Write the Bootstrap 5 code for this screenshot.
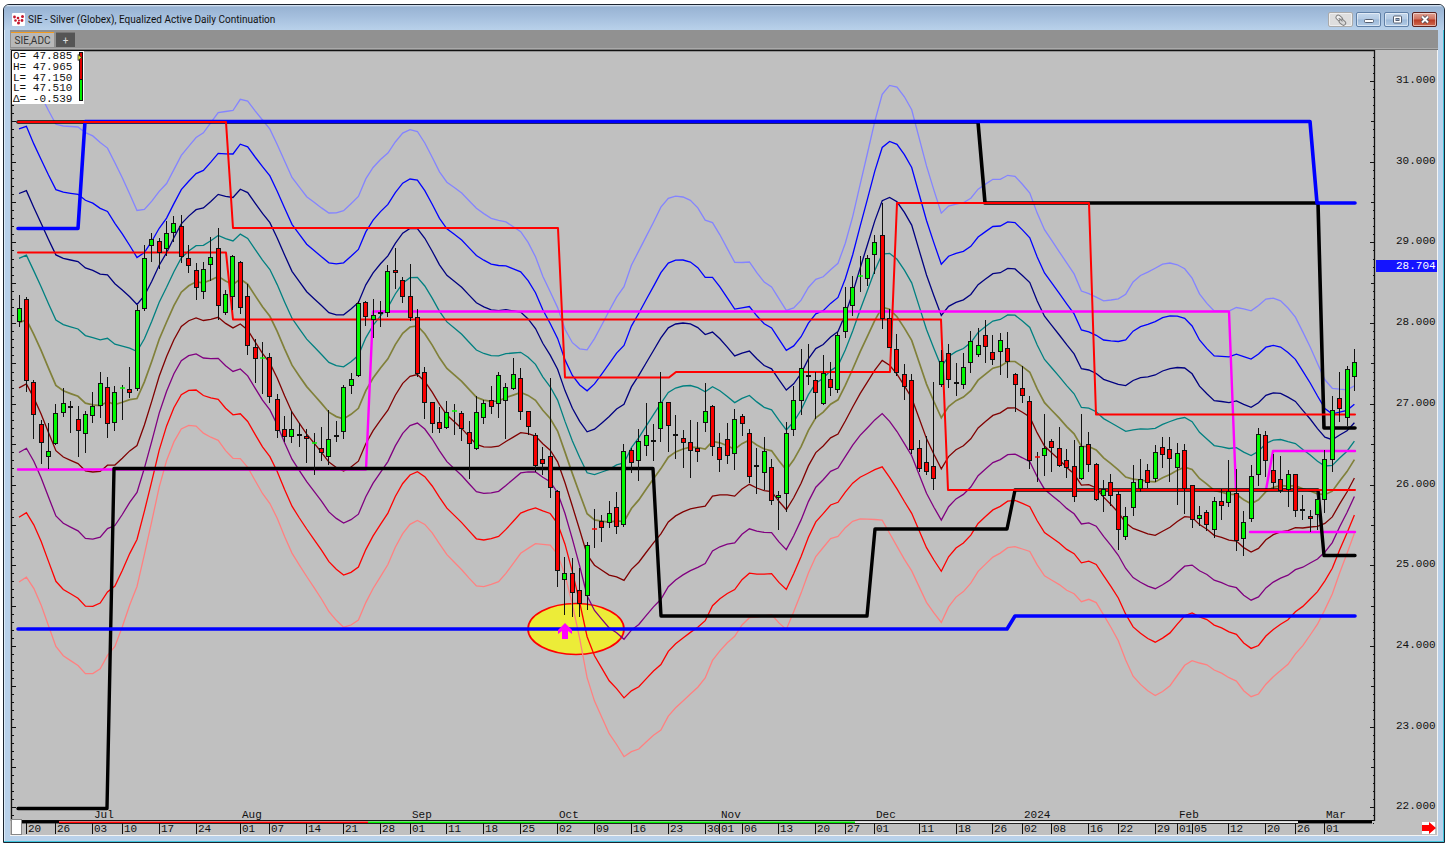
<!DOCTYPE html>
<html lang="en">
<head>
<meta charset="utf-8">
<meta name="viewport" content="width=device-width, initial-scale=1">
<title>SIE - Silver (Globex)</title>
<link rel="stylesheet" href="https://cdn.jsdelivr.net/npm/bootstrap@5.3.0/dist/css/bootstrap.min.css">
<style>
  body { background: #fff; font-family: Roboto, "Liberation Sans", sans-serif; color: #111; }
  .desk { padding: 4px 2px 4px 3px; }
  .win { border: 1px solid #1c2430; border-radius: 6px 6px 0 0; padding: 0 6px 6px; background: #b9d1ea;
         box-shadow: inset -1px -1px 0 #3fc4dc, inset 1px 1px 0 #dcebf8; }
  .title-bar { height: 25px; margin: 0 -6px; padding: 4px 7px 0 8px; border-radius: 5px 5px 0 0;
               background: linear-gradient(#e4eef8 0, #98b3d3 2px, #a6c0de 50%, #b9d1ea); font-size: 10px; gap: 3px; line-height: 16px; }
  .win-buttons { gap: 3px; }
  .wbtn { width: 25px; height: 15px; padding: 0; border: 1px solid #5f7fa6; border-radius: 2px; line-height: 0;
          background: linear-gradient(#c5d8ed, #b3cae4 48%, #9bb8d8 52%, #b4cce6); box-shadow: inset 0 0 0 1px #ffffff80; }
  .wbtn.link-btn { border-color: #aaa; background: #dedede; }
  .wbtn.close-btn { border-color: #5b2320; background: linear-gradient(#e0a294, #d0715e 48%, #b93a22 52%, #cf6a50); }
  .tab-strip { height: 18px; background: #919191; padding: 2px 1px 0; gap: 2px; font-size: 10px; line-height: 13px; }
  .tab { height: 15px; padding: 0; border: 0; color: #333; background: #b8b8b8; border-top: 1px solid #f29a1f; width: 43px; }
  .tab.add { width: 19px; color: #ddd; background: #555; border-top-color: #777; }
  .pane { border: solid #f4f4f4; border-width: 0 1px 1px 0; background: #c0c0c0; min-height: 0; }
  .rule { height: 2px; background: linear-gradient(#aaa 50%, #777 50%); }
  .chart-box { min-height: 0; }
  .chart-box svg.chart { width: 100%; height: 100%; }
  .quote { left: 2px; top: 1px; width: 72px; height: 53px; background: #fff; padding: 0 1px;
           font: 11px/10px "Liberation Mono", monospace; white-space: pre; }
  .chart text { font: 11px "Liberation Mono", monospace; fill: #111; }
</style>
</head>
<body>
<div class="desk vh-100">
  <main class="win d-flex flex-column h-100">
    <header class="title-bar d-flex align-items-center">
      <svg width="13" height="13" viewBox="0 0 13 13" aria-hidden="true">
        <rect width="13" height="13" rx="1" fill="#fff"/>
        <g fill="#c4162c"><circle cx="2.500" cy="4" r="1.400"/><circle cx="3.500" cy="7.500" r="1.300"/><circle cx="6" cy="5" r="1.300"/><circle cx="6.500" cy="10" r="1.500"/><circle cx="7" cy="7.500" r="1"/><circle cx="10.500" cy="3.500" r="1.500"/><circle cx="10" cy="7.500" r="1.400"/></g>
      </svg>
      <span class="flex-grow-1">SIE - Silver (Globex), Equalized Active Daily Continuation</span>
      <div class="win-buttons d-flex">
        <button class="wbtn link-btn" type="button" aria-label="Link window"><svg width="14" height="12" viewBox="0 0 14 12" fill="none" stroke="#808080"><g transform="rotate(40 7 6)"><rect x="1" y="3.500" width="7" height="4.500" rx="2.200" fill="#f2f2f2"/><rect x="6" y="4.500" width="7" height="4.500" rx="2.200" fill="#d8d8d8"/><path d="M4 6h5"/></g></svg></button>
        <button class="wbtn" type="button" aria-label="Minimize"><svg width="12" height="9" viewBox="0 0 12 9"><rect x="1.500" y="4.500" width="9" height="3" rx="1" fill="#fff" stroke="#555e70"/></svg></button>
        <button class="wbtn" type="button" aria-label="Maximize"><svg width="12" height="9" viewBox="0 0 12 9"><rect x="2.500" y="1" width="8" height="7" rx="1" fill="#fff" stroke="#555e70"/><rect x="5" y="3.500" width="3" height="2" fill="#8fa8c8" stroke="#555e70"/></svg></button>
        <button class="wbtn close-btn" type="button" aria-label="Close"><svg width="12" height="9" viewBox="0 0 12 9"><path d="M3 1.500l6 6M9 1.500l-6 6" stroke="#444a58" stroke-width="3.600"/><path d="M3 1.500l6 6M9 1.500l-6 6" stroke="#fff" stroke-width="2"/></svg></button>
      </div>
    </header>
    <nav class="tab-strip d-flex" aria-label="Charts">
      <button class="tab" type="button">SIE,ADC</button>
      <button class="tab add" type="button" aria-label="Add chart">+</button>
    </nav>
    <div class="rule"></div>
    <section class="pane flex-grow-1 d-flex">
      <div class="chart-box position-relative flex-grow-1">
        <svg class="chart d-block" id="chart" viewBox="10 50 1427 785" preserveAspectRatio="none" role="img" aria-label="Silver daily candles"></svg>
        <div class="quote position-absolute d-flex justify-content-between">
          <div class="d-flex flex-column justify-content-between">
            <div>O= 47.885</div>
            <div>H= 47.965</div>
            <div>L= 47.150</div>
            <div>L= 47.510</div>
            <div>&Delta;= -0.539</div>
          </div>
          <svg width="6" height="52" viewBox="0 0 6 52" aria-hidden="true"><rect x="2.500" y="1.500" width="3" height="27" fill="#e00000" stroke="#111"/><rect x="2.500" y="28.500" width="3" height="21" fill="#0e0" stroke="#111"/><path d="M1 3.500L4.500 6.500l-3.500 3z" fill="#ee3" stroke="#222" stroke-width=".7"/></svg>
        </div>
      </div>
    </section>
  </main>
</div>
<script src="https://cdn.jsdelivr.net/npm/bootstrap@5.3.0/dist/js/bootstrap.bundle.min.js"></script>
<script>
const STEP = 7.378, X0 = 19, BARS = 182;
const bx = i => X0 + i * STEP;
const py = p => 81 + (31 - p) * 80.7;
let out = '';

/* outermost bands; the seven inner ones are evenly spaced between them */
const upper = [19,64,26,61,34,81,45,104,56,124.5,63,126,78,127,85,132.5,93,136,100,142.5,107.5,148,115,163,122,177,137,210.5,144,210,152,201,159,191.5,167,183,174,169.5,181.5,155,196.5,137,204,132.5,218,112.5,233,110.5,240.3,99.3,247.7,101,255,110.7,270,129.3,276.7,143.3,291.7,177,306.7,196.7,328.3,213,336,213,343,211.3,358.3,196.7,365.7,179,373.3,167.3,380.7,159.3,387.7,153.3,395.3,142,402.3,133.3,410,129.7,417.3,131.3,425,143.3,440,172.7,447.3,182.7,460,191.3,476,208,490,218,497,220,505.7,221.7,520.7,231.7,528.3,242.7,535.7,257.3,542.7,276,557.3,306.7,565,329.3,572.3,342.7,580,349,587,350,594.7,338.3,616,298,624,286.7,631,266,653.3,222.7,661,207,668,198.5,676,196,683,197,690,200,698,208,705,220,712.7,222.7,720,235,735,263,750,262,757,273,764,282,771,286,786.7,311,793.3,308.3,800.7,300.7,808.3,287.7,815.7,279.3,822.7,277.3,830.3,270,837.7,264,845.3,243.3,852.7,216.7,860,185,875,120.7,882.3,94,889.7,85.3,897,87,904.3,96.7,911.7,109.7,926.7,166.7,941,213.3,948.7,206,955.7,204.3,963.3,202.7,970.7,198.3,978.3,189,992.7,179.3,1000.7,179.3,1007.7,175.3,1015,176.3,1029.3,191.7,1037,212.7,1044.3,229.3,1074.3,274.3,1081.3,291,1090,294,1104,301,1118,299,1126,294,1133,282,1141,275,1148,272,1163,264,1170,263,1178,265,1185,269,1192,278,1200,295,1213,311,1230,311,1236.7,307.3,1244,309,1251,311,1258,306,1266,299,1273,298,1281,301,1288,308,1296,318,1310,346.7,1325,380,1332.3,388.3,1346.7,390,1356,385];
const lower = [19,582,26.3,577,34,588.7,41.3,605.3,55.7,646.3,63.3,655.7,78.3,665.7,85,673.7,92.7,673.7,100,669,107.3,655.7,115,646.3,122.3,626.7,130,604,137,586.7,147.7,540,160,483.3,166.7,460,174,441.7,181.3,429,188.7,425.3,196,426,203.7,433.3,211,437.3,218.3,440.3,225.3,450.3,232.7,458.3,240.3,458.7,247.7,467.3,262.3,493.3,270,503.7,277.3,518.3,286,540,293.3,556,321.7,599.3,329,611.7,336,620,343.3,627.3,351,625,358,621,365.7,602.7,373,588.7,387.7,565,395,547.7,402.3,534,410,524.3,417.3,520.3,424.7,524.3,432,532.7,447.3,555.3,462,570,476,586,484,586.7,498.3,582,506,573.3,520.7,553.3,535.3,543.7,550,545,556,550,565,575,573.3,608.3,580,640,587,677.3,594.3,700.7,609,733.3,616.3,744,624,756.7,631.3,751.7,638.7,749,653.3,735.3,660.7,730.3,668.3,716,675.7,707.7,697.7,687.3,705,678.3,712.7,660,720,650.7,727,643,735,636,742,625,749.3,617.7,760,617,771,614,779,623,787,630,791.7,616.7,801,593.3,808.3,573.3,815.7,556.7,830.3,538.7,837.7,536.7,845,528,852.7,521.3,860,519,882,519.7,889.3,532.7,903.7,558.3,911.3,570,926.7,602.7,941,623,948.7,606.7,955.7,597.3,963.3,591.7,970.7,583.3,978.3,571,993.3,556.7,1000,553.3,1007.3,547.7,1015,546.7,1029.7,551.3,1037.3,565,1044.7,576,1060,585,1066,590,1073.7,593.3,1081.3,601.7,1088.7,599.3,1096,602.3,1111,627.3,1118.3,640.7,1126,660.7,1133.3,676.7,1140.3,684.3,1147.7,690.7,1155,695.7,1162.3,691.7,1170,685.7,1184.7,665.3,1192,660.7,1199.3,663,1206.7,664.7,1214.3,670,1221.3,673,1229,677.7,1236.3,681,1243.7,690.7,1251,696.7,1258.3,694.3,1266,684,1273.3,676.7,1288,664.3,1295.3,654,1302.7,645.7,1317.3,624.7,1324.7,610,1332.3,594,1340,571.7,1347.3,552.7,1356,529];
function at(a, x) {
  for (let k = 0; k + 3 < a.length; k += 2)
    if (x <= a[k + 2]) return a[k + 1] + (a[k + 3] - a[k + 1]) * (x - a[k]) / (a[k + 2] - a[k]);
  return a[a.length - 1];
}
const bandColors = ['#8484ff', '#0000ff', '#000080', '#008080', '#80803a', '#800000', '#800080', '#ff0000', '#ff8080'];

/* circle round the October low */
out += '<ellipse cx="576" cy="629" rx="48" ry="25.500" fill="#ecec38" stroke="#f00" stroke-width="1.700"/>';
bandColors.forEach((c, n) => {
  let p = '';
  for (let i = 0; i < BARS; i++) {
    const x = bx(i), u = at(upper, x), l = at(lower, x);
    p += x.toFixed(1) + ',' + (u + (l - u) * n / 8).toFixed(1) + ' ';
  }
  out += `<polyline points="${p}" fill="none" stroke="${c}" stroke-width="${n === 4 ? 1.7 : 1.3}"/>`;
});

/* channel lines */
const steps = [
  ['#ff00ff', 2.4, '18,469.5 366,469.5 373,311.5 1229,311.5 1236,490 1266,490 1273,451 1355,451'],
  ['#ff00ff', 2.4, '1250,532 1355,532'],
  ['#000', 3.6, '18,122 978,122 985,203 1318,203 1324,428 1355,428'],
  ['#000', 3.4, '18,808.5 107,808.5 114,468.5 653,468.5 661,616 867,616 875,529 1007,529 1015,490 1318,490 1324,555.500 1355,555.5'],
  ['#0000ff', 3.6, '18,228.5 78,228.5 85,121.5 1310,121.5 1317,203 1355,203'],
  ['#0000ff', 3.6, '18,629 1007,629 1015,616 1355,616'],
  ['#ff0000', 2, '18,122 226,122 233,228 558,228 565,377.5 669,377.5 676,372 890,372 897,203 1089,203 1096,414.5 1355,414.5'],
  ['#ff0000', 2, '18,252.5 226,252.5 233,319.5 941,319.5 948,490 1355,490']
];
steps.forEach(s => out += `<polyline points="${s[2]}" fill="none" stroke="${s[0]}" stroke-width="${s[1]}" stroke-linecap="round" stroke-linejoin="round"/>`);

/* candles: body top, body bottom, high, low, then g (up) or r (down) */
const candles = `308 322 295 327 g|299 381 297 392 r|382 415 380 439 r|424 443 420 464 r|451 457 423 469 g|413 444 404 445 g|403 413 388 417 g|406 408 401 433 r|419 431 406 457 r|414 434 411 453 g|406 416 392 423 g|383 406 372 418 g|387 424 377 438 r|392 423 386 431 g|388 388 385 420 g|389 393 367 398 r|310 389 305 391 g|258 309 245 311 g|239 246 233 262 g|241 253 238 269 r|233 249 221 256 g|223 233 216 242 g|226 257 215 263 r|258 266 245 273 r|270 288 263 300 r|269 292 262 299 g|257 265 237 281 g|248 306 228 320 r|294 313 290 315 g|256 297 255 310 g|262 308 261 314 r|296 346 284 355 r|347 359 339 383 r|358 358 342 394 g|357 397 353 403 r|399 431 394 438 r|429 437 416 442 r|429 437 411 443 g|434 436 423 447 r|436 439 429 463 r|443 443 433 475 g|448 453 427 461 r|439 457 410 465 g|435 437 421 442 r|387 432 385 439 g|379 386 373 394 g|303 376 301 377 g|302 317 301 326 r|315 320 299 338 g|312 314 301 327 r|271 313 265 317 g|270 273 248 289 r|280 297 277 303 r|296 318 264 321 r|317 374 309 377 r|372 403 367 419 r|402 424 402 433 r|422 429 407 433 r|412 428 401 429 g|411 411 404 435 g|413 429 411 441 r|432 444 421 479 r|412 449 396 450 g|403 418 400 424 g|400 407 386 414 r|375 404 372 418 g|387 401 383 439 g|374 389 358 390 g|378 412 368 420 r|411 427 411 435 r|435 466 433 472 r|459 464 447 475 r|456 488 378 498 r|491 571 490 587 r|573 580 557 615 g|573 593 558 617 r|590 604 568 617 r|545 596 542 610 g|529 529 509 548 r|521 528 515 542 r|513 523 501 528 g|507 527 492 534 r|451 525 444 527 g|450 463 448 473 r|441 461 429 481 g|435 446 403 456 g|440 442 424 461 g|402 429 372 442 g|402 426 402 452 r|434 436 415 459 g|438 443 430 468 r|442 451 420 478 r|448 452 422 462 r|411 423 383 432 g|406 447 405 456 r|447 460 433 472 r|439 456 423 464 r|419 454 409 470 g|416 424 414 436 r|433 477 429 483 r|465 467 448 494 g|451 473 437 490 g|467 501 459 505 r|495 498 491 530 g|433 494 422 512 g|400 430 386 436 g|368 401 349 415 g|375 376 344 385 g|380 393 372 419 r|373 404 355 405 g|379 388 362 396 r|335 390 332 393 g|307 332 287 338 g|287 306 276 316 g|276 276 256 292 g|258 279 255 286 g|242 255 235 274 g|235 319 203 329 r|318 348 309 348 r|349 373 334 376 r|374 387 364 400 r|380 450 374 454 r|448 469 440 472 r|462 472 436 475 r|466 479 382 490 r|361 385 350 387 g|353 380 344 388 r|382 384 363 396 r|367 385 353 389 g|341 363 331 373 g|345 355 328 357 g|335 347 320 363 r|352 360 335 365 r|340 352 333 375 g|348 362 332 378 r|374 385 373 412 r|388 396 366 403 r|401 461 396 469 r|457 457 452 482 r|448 456 414 476 g|441 448 439 472 r|448 466 427 467 r|460 468 449 478 r|466 497 440 502 r|446 479 414 480 g|444 465 432 472 r|464 500 463 501 r|489 496 480 512 g|482 496 474 506 r|494 530 491 550 r|516 537 507 540 g|482 508 465 516 g|479 489 459 492 g|470 483 464 488 r|452 479 445 482 g|447 455 437 468 r|449 459 437 482 r|453 468 443 505 g|450 489 444 514 r|485 520 485 528 r|515 519 506 526 g|512 525 510 531 r|501 530 497 538 g|501 506 489 520 r|491 503 460 507 g|493 541 469 551 r|522 539 511 556 g|476 519 465 522 g|434 475 428 486 g|435 461 431 477 r|470 483 454 489 r|479 491 456 493 r|474 490 470 507 g|474 511 474 517 r|509 511 495 520 g|516 519 510 532 r|499 515 492 530 g|459 500 450 513 g|410 460 396 472 g|398 409 372 422 r|369 418 366 426 g|362 377 349 391 g`;
candles.split('|').forEach((row, i) => {
  const [t, b, h, l, k] = row.split(' '), x = Math.floor(bx(i)), fill = k === 'g' ? '#00f800' : '#f80000';
  out += `<path d="M${x + .5} ${h}V${l}" stroke="#111"/>`;
  out += t === b
    ? `<path d="M${x - 2} ${+t}h5" stroke="${fill}" stroke-width="1.500"/>`
    : `<rect x="${x - 1.5}" y="${+t + .5}" width="4" height="${Math.max(1, b - t - 1)}" fill="${fill}" stroke="#111"/>`;
});
out += '<path d="M565 623l7 7v4l-4-3v8h-6v-8l-4 3v-4z" fill="#f0f"/>';

/* price scales */
out += '<path d="M11.500 51V821M11 50.500H1375M1374.500 50V821" stroke="#111" stroke-width="1.300"/>';
let ticks = '';
for (let n = 218; n <= 313; n++) {
  const y = Math.round(py(n / 10)) + .5, w = n % 10 === 0 ? 4 : n % 5 === 0 ? 3 : 1;
  ticks += `M12 ${y}h${n % 5 ? 2 : 4}M1374 ${y}h${-w}`;
}
out += `<path d="${ticks}" stroke="#111"/>`;
for (let p = 31; p >= 22; p--) out += `<text x="1396" y="${Math.round(py(p)) + 2}">${p}.000</text>`;
out += '<rect x="1376" y="260" width="61" height="12" fill="#1414ff"/><text x="1396" y="269" style="fill:#fff">28.704</text>';

/* time scale */
out += '<path d="M12 820.500H1375" stroke="#111"/><path d="M22 822.500H1372" stroke="#eee" stroke-width="2"/><path d="M22 822H59M1298 822H1372" stroke="#000" stroke-width="3"/><path d="M59 822.500H368" stroke="#f00" stroke-width="2"/><path d="M368 822.500H855" stroke="#0e0" stroke-width="2"/><path d="M59 823.500H1298" stroke="#222"/>';
const days = '1:20 5:26 10:03 14:10 19:17 24:24 30:01 34:07 39:14 44:21 49:28 53:01 58:11 63:18 68:25 73:02 78:09 83:16 88:23 93:30 95:01 98:06 103:13 108:20 112:27 116:01 122:11 127:18 132:26 136:02 140:08 145:16 149:22 154:29 157:01 159:05 164:12 169:20 173:26 177:01';
days.split(' ').forEach(d => {
  const [i, t] = d.split(':'), x = Math.floor(bx(+i));
  out += `<path d="M${x + .5} 823V834" stroke="#111"/><text x="${x + 2}" y="832">${t}</text>`;
});
const months = [['Jul', 10], ['Aug', 30], ['Sep', 53], ['Oct', 73], ['Nov', 95], ['Dec', 116], ['2024', 136], ['Feb', 157], ['Mar', 177]];
months.forEach(([t, i]) => out += `<text x="${Math.floor(bx(i)) + 2}" y="818">${t}</text>`);
out += '<rect x="11.500" y="819.500" width="10" height="15" fill="#fff" stroke="#888"/>';
out += '<path d="M1422 822h13v12h-13z" fill="#fff"/><path d="M1422 825h7v-3l7 6-7 6v-3h-7z" fill="#f00"/>';
document.getElementById('chart').innerHTML = out;
</script>
</body>
</html>
